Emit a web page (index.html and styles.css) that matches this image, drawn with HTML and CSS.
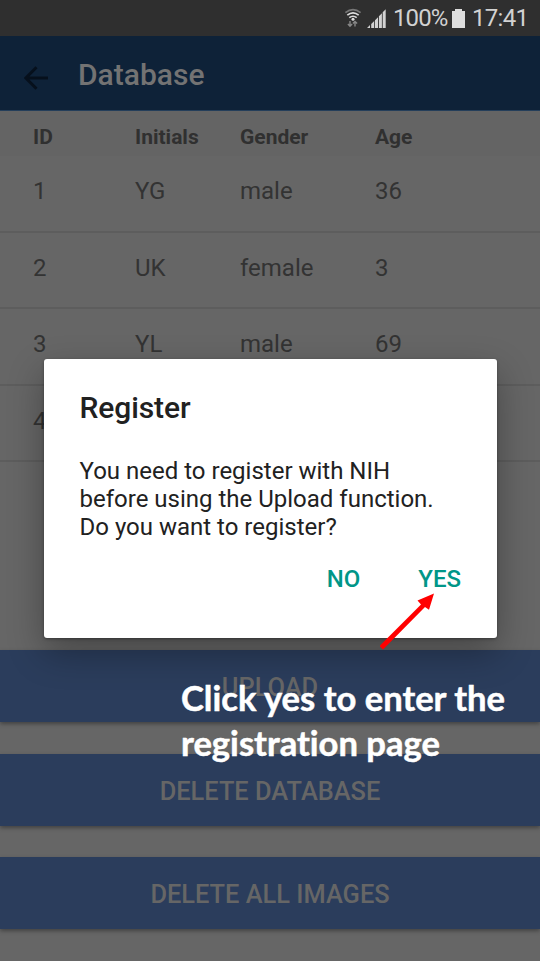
FILE: index.html
```html
<!DOCTYPE html>
<html lang="en">
<head>
<meta charset="utf-8">
<title>Database</title>
<link rel="stylesheet" href="styles.css">
</head>
<body>
<div class="screen">
  <div class="status">
    <svg class="wifi" width="18" height="20" viewBox="0 0 18 20" fill="none" stroke-width="1.7">
      <path d="M1.4 4.6Q9 -1.4 16.6 4.6" stroke="#777"/>
      <path d="M3.3 7.2Q9 2.6 14.7 7.2M5.3 9.7Q9 6.8 12.7 9.7" stroke="#ddd"/>
      <circle cx="9" cy="11.3" r="1.5" fill="#ddd"/>
      <path d="M6 13v5M3.900 16l2.100 2.200L8.100 16M11 18.500v-5M8.900 15.600l2.100-2.200 2.100 2.200" stroke="#888" stroke-width="1.4"/>
    </svg>
    <svg class="signal" width="19" height="19" viewBox="0 0 19 19" fill="#d2d2d2">
      <path d="M0 19l3-3v3zM4.200 15l3-3v7h-3zM8 11.200l3-3V19H8zM11.900 7.200l3-3V19h-3zM15.700 3.300l3-3V19h-3z"/>
    </svg>
    <span class="percent">100%</span>
    <svg class="battery" width="13" height="19" viewBox="0 0 13 19" fill="#dedede"><path d="M3 0h7v2h3v17H0V2h3z"/></svg>
    <span class="clock">17:41</span>
  </div>
  <header class="bar">
    <svg width="24" height="24" viewBox="0 0 24 24" fill="none" stroke="#06101c" stroke-width="3"><path d="M24 12H2M12.500 1.200L1.800 12l10.700 10.800"/></svg>
    <h1>Database</h1>
  </header>
  <div class="row head"><span>ID</span><span>Initials</span><span>Gender</span><span>Age</span></div>
  <div class="row"><span>1</span><span>YG</span><span>male</span><span>36</span></div>
  <div class="row"><span>2</span><span>UK</span><span>female</span><span>3</span></div>
  <div class="row"><span>3</span><span>YL</span><span>male</span><span>69</span></div>
  <div class="row"><span>4</span><span></span><span></span><span></span></div>
  <div class="actions">
    <div class="button">UPLOAD</div>
    <div class="button">DELETE DATABASE</div>
    <div class="button">DELETE ALL IMAGES</div>
  </div>
  <div class="dialog">
    <h2>Register</h2>
    <p>You need to register with NIH<br>before using the Upload function.<br>Do you want to register?</p>
    <div class="choices"><span>NO</span><span>YES</span></div>
  </div>
  <svg class="arrow" width="56" height="58" viewBox="0 0 56 58" fill="#f00"><path d="M-.5 54L41 12.500L37.500 8.500L54 1.500L49 17.800L45 15L3 57.500z"/></svg>
  <div class="note">Click yes to enter the<br>registration page</div>
</div>
</body>
</html>
```

FILE: styles.css
```css
* { box-sizing: border-box; }
body { margin: 0; font-family: Roboto, sans-serif; }
h1, h2, p { margin: 0; font-weight: 500; }
.screen { position: relative; width: 540px; height: 961px; background: #666; overflow: hidden; display: flex; flex-direction: column; }
.status { height: 36px; background: #2f2f2f; display: flex; align-items: center; padding-left: 344px; color: #d2d2d2; font-size: 24px; white-space: nowrap; flex: none; }
.status svg { flex: none; }
.signal { margin-left: 5px; }
.percent { margin-left: 7px; width: 53px; margin-right: 6px; letter-spacing: -0.9px; }
.clock { margin-left: 7px; letter-spacing: -0.7px; }
.bar { height: 75px; background: #0e2238; display: flex; align-items: center; padding: 2px 0 0 24px; flex: none; border-bottom: 1px solid #243e5a; }
.bar svg { margin-top: 7px; }
h1 { margin-left: 30px; font-size: 30px; color: #737373; }
.row { display: grid; grid-template-columns: 102px 105px 135px 1fr; padding: 0 0 4px 33px; height: 76.500px; align-items: center; border-bottom: 2px solid #5d5d5d; color: #333; font-size: 24px; flex: none; }
.head { height: 45px; padding-bottom: 0; padding-top: 7px; border: 0; font-size: 21px; font-weight: 700; background: #646464; color: #303030; }
.actions { margin-top: 188px; display: flex; flex-direction: column; gap: 31.500px; }
.button { height: 72px; background: #2b3d5c; box-shadow: 0 2px 4px rgba(0,0,0,.35); color: #666; font-size: 25.400px; font-weight: 500; display: flex; align-items: center; justify-content: center; padding-top: 2px; }
.dialog { position: absolute; left: 43.500px; top: 359px; width: 453px; height: 279px; background: #fff; border-radius: 3px; padding: 31px 35.500px 0 36px; color: #212121; box-shadow: 0 14px 36px rgba(0,0,0,.32), 0 1px 3px rgba(0,0,0,.35); }
h2 { font-size: 30px; line-height: 36px; letter-spacing: -0.1px; }
.dialog p { margin-top: 31px; font-size: 24px; line-height: 28.200px; font-weight: 400; white-space: nowrap; }
.choices { margin-top: 23px; display: flex; justify-content: flex-end; gap: 58px; color: #009688; font-size: 24px; line-height: 28px; font-weight: 500; }
.arrow { position: absolute; left: 380px; top: 592px; }
.note { position: absolute; left: 181px; top: 675px; color: #fff; font-family: Lato, sans-serif; font-weight: 700; font-size: 34.600px; line-height: 45px; white-space: nowrap; font-variant-ligatures: none; -webkit-text-stroke: .5px #fff; }
```
